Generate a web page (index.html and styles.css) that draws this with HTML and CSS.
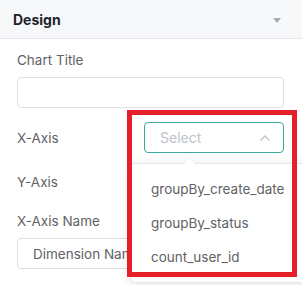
FILE: index.html
```html
<!DOCTYPE html>
<html>
<head>
    <title>Design Panel</title>
    <link rel="stylesheet" href="styles.css">
</head>
<body>
    <div class="panel">
        <div class="panel-header">
            <span class="panel-title">Design</span>
            <span class="caret"></span>
        </div>

        <div class="panel-body">
            <div class="field">
                <label class="label">Chart Title</label>
                <div class="input"></div>
            </div>

            <div class="row">
                <label class="label">X-Axis</label>
                <div class="select is-focus">
                    <span class="placeholder">Select</span>
                    <svg class="chevron" width="12" height="8" viewBox="0 0 12 8">
                        <path d="M1.5 6.5 L6 2 L10.5 6.5" fill="none" stroke="#c0c4cc" stroke-width="1.3"/>
                    </svg>
                </div>
            </div>

            <div class="row">
                <label class="label">Y-Axis</label>
            </div>

            <div class="field">
                <label class="label">X-Axis Name</label>
                <div class="input"><span class="value">Dimension Name</span></div>
            </div>
        </div>

        <div class="dropdown">
            <div class="dropdown-arrow"></div>
            <div class="option">groupBy_create_date</div>
            <div class="option">groupBy_status</div>
            <div class="option">count_user_id</div>
        </div>

        <div class="highlight"></div>
    </div>
</body>
</html>
```

FILE: styles.css
```css
body { margin: 0; font-family: Inter, "Noto Sans", sans-serif; background: #fff; overflow: hidden; }
.panel { position: relative; width: 302px; height: 285px; }
.panel-header { height: 38px; display: flex; align-items: center; justify-content: space-between; padding: 0 21px 0 13px; background: #f7f8fa; border-bottom: 1px solid #e6e8eb; }
.panel-title { font-size: 14px; font-weight: 700; color: #1f2329; }
.caret { width: 0; height: 0; border-left: 4px solid transparent; border-right: 4px solid transparent; border-top: 5px solid #a8abb2; margin-top: 2px; }
.panel-body { display: flex; flex-direction: column; gap: 14px; padding: 11px 18px 0 17px; }
.field { display: flex; flex-direction: column; gap: 7px; }
.field + .field { gap: 6px; }
.label { font-size: 13.5px; color: #606266; line-height: 20px; }
.input { height: 29px; border: 1px solid #dcdfe6; border-radius: 4px; display: flex; align-items: center; padding-left: 15px; overflow: hidden; white-space: nowrap; }
.value { font-size: 13.5px; color: #606266; }
.row { height: 31px; display: flex; align-items: center; justify-content: space-between; }
.row + .row { margin-top: -1px; }
.select { border: 1px solid #dcdfe6; border-radius: 4px; display: flex; align-items: center; justify-content: space-between; padding: 0 12px 0 15px; box-sizing: border-box; width: 140px; height: 31px; }
.select.is-focus { border-color: #3aa99a; }
.placeholder { font-size: 14px; color: #c0c4cc; }
.dropdown { position: absolute; left: 130px; top: 163px; width: 180px; padding: 8px 0; background: #fff; border: 1px solid #e4e7ed; border-radius: 4px; box-shadow: 0 2px 12px rgba(0, 0, 0, 0.1); }
.dropdown-arrow { position: absolute; top: -6px; left: 52px; width: 0; height: 0; border-left: 6px solid transparent; border-right: 6px solid transparent; border-bottom: 6px solid #fff; filter: drop-shadow(0 -1px 0 #ebeef5); }
.option { height: 34px; line-height: 34px; padding-left: 20px; font-size: 13.5px; color: #606266; }
.highlight { position: absolute; left: 127px; top: 110px; width: 160px; height: 157px; border: 5px solid #e5202a; }
```
